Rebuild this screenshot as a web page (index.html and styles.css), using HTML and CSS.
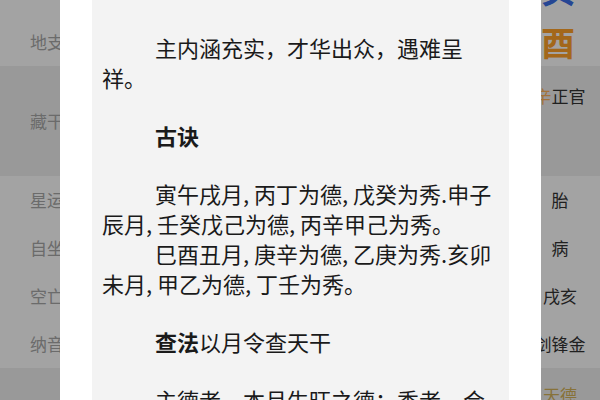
FILE: index.html
```html
<!DOCTYPE html>
<html lang="zh-CN">
<head>
<meta charset="utf-8">
<title>八字</title>
<link rel="stylesheet" href="styles.css">
</head>
<body>
<div class="page">
  <div class="row row-gan">
    <div class="label">天干</div>
    <div class="mid"></div>
    <div class="cell big blue">癸</div>
  </div>
  <div class="row row-zhi">
    <div class="label">地支</div>
    <div class="mid"></div>
    <div class="cell big orange">酉</div>
  </div>
  <div class="row row-cang alt">
    <div class="label">藏干</div>
    <div class="mid"></div>
    <div class="cell top"><span class="gan-xin">辛</span>正官</div>
  </div>
  <div class="row">
    <div class="label">星运</div>
    <div class="mid"></div>
    <div class="cell">胎</div>
  </div>
  <div class="row">
    <div class="label">自坐</div>
    <div class="mid"></div>
    <div class="cell">病</div>
  </div>
  <div class="row">
    <div class="label">空亡</div>
    <div class="mid"></div>
    <div class="cell">戌亥</div>
  </div>
  <div class="row">
    <div class="label">纳音</div>
    <div class="mid"></div>
    <div class="cell">剑锋金</div>
  </div>
  <div class="row row-sha alt">
    <div class="label"></div>
    <div class="mid"></div>
    <div class="cell top gold">天德</div>
  </div>
</div>

<div class="backdrop"></div>

<div class="modal">
  <div class="modal-body">
    <p class="para"><span class="ind"></span>主内涵充实，才华出众，遇难呈祥。</p>
    <p class="para"><span class="ind"></span><b>古诀</b></p>
    <div class="para">
      <div><span class="ind"></span>寅午戌月, 丙丁为德, 戊癸为秀.申子辰月, 壬癸戊己为德, 丙辛甲己为秀。</div>
      <div><span class="ind"></span>巳酉丑月, 庚辛为德, 乙庚为秀.亥卯未月, 甲乙为德, 丁壬为秀。</div>
    </div>
    <p class="para"><span class="ind"></span><b>查法</b>以月令查天干</p>
    <p class="para"><span class="ind"></span>主德者，本月生旺之德；秀者，合天地中和之气，五行变化而成者也。</p>
  </div>
</div>
</body>
</html>
```

FILE: styles.css
```css
html, body {
  margin: 0;
  padding: 0;
}
body {
  width: 600px;
  height: 400px;
  overflow: hidden;
  position: relative;
  background: #ffffff;
  font-family: "Noto Sans CJK SC", "Noto Sans", sans-serif;
}

/* background chart page */
.page {
  margin-top: -40px;
  display: flex;
  flex-direction: column;
}
.row {
  display: flex;
  height: 48px;
  align-items: center;
  background: #ffffff;
}
.row.alt {
  background: #f0f0f0;
}
.row-gan {
  height: 58px;
}
.row-zhi {
  height: 48px;
}
.row-cang {
  height: 110px;
  align-items: flex-start;
}
.row-sha {
  height: 120px;
  align-items: flex-start;
}
.label {
  width: 94px;
  text-align: center;
  font-size: 17px;
  line-height: 22px;
  color: #a8a8a8;
  flex-shrink: 0;
}
.row-cang .label {
  align-self: center;
}
.mid {
  flex: 1;
}
.cell {
  width: 80px;
  text-align: center;
  font-size: 17px;
  line-height: 22px;
  color: #333333;
  flex-shrink: 0;
  white-space: nowrap;
}
.cell.top {
  padding-top: 19px;
}
.row-sha .cell.top {
  padding-top: 16px;
}
.cell.big {
  font-size: 34px;
  line-height: 40px;
  font-weight: bold;
  padding-right: 2px;
}
.blue {
  color: #3a6ee8;
}
.orange {
  color: #ffa12a;
}
.gan-xin {
  color: #ffb35c;
}
.gold {
  color: #d4b25a;
}

.backdrop {
  position: absolute;
  inset: 0;
  background: rgba(0, 0, 0, 0.36);
}

/* modal */
.modal {
  position: absolute;
  top: 0;
  bottom: 0;
  left: 60px;
  width: 481px;
  background: #ffffff;
  padding: 0 32px;
  box-sizing: border-box;
  display: flex;
}
.modal-body {
  flex: 1;
  background: #f3f3f3;
  padding: 32px 10px 0 10px;
  overflow: hidden;
  font-size: 22px;
  line-height: 30px;
  color: #1a1a1a;
}
.para {
  margin: 0 0 28px 0;
}
.para b {
  font-weight: bold;
}
.ind {
  display: inline-block;
  width: 53px;
}
```
